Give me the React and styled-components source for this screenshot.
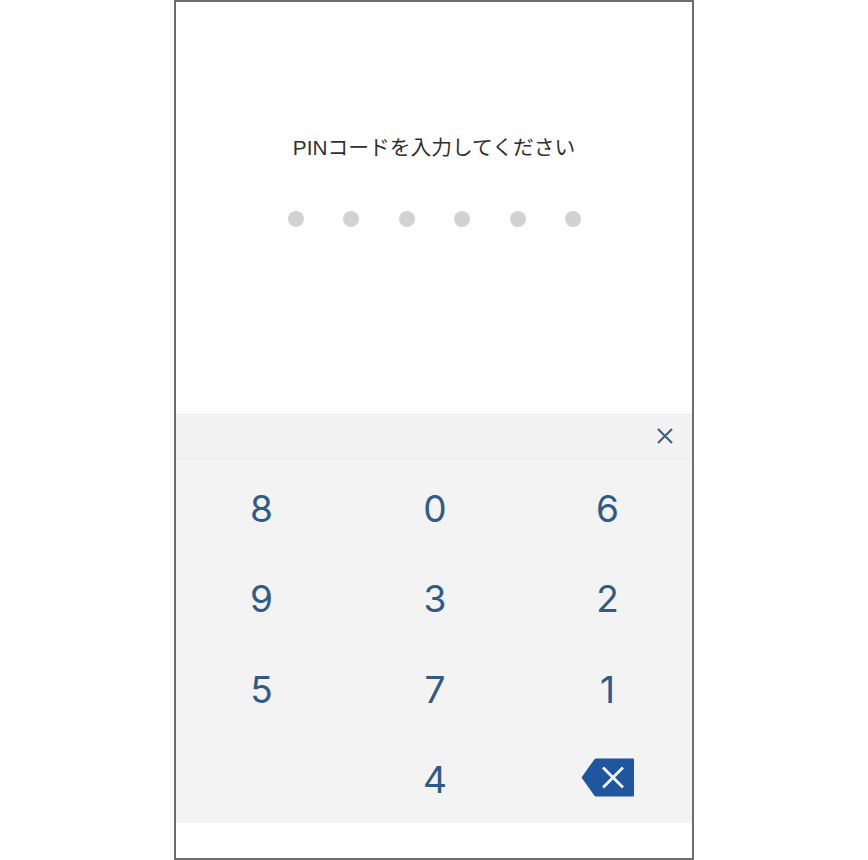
import React from "react";
import styled, { createGlobalStyle } from "styled-components";

const PIN_LENGTH = 6;
const KEYS = ["8", "0", "6", "9", "3", "2", "5", "7", "1", "", "4", "delete"];

const App = () => {
    const renderKey = (item, index) => {
        if (item === "") {
            return <span key={index} />;
        }

        if (item === "delete") {
            return (
                <Key key={index} type="button" aria-label="削除">
                    <DeleteIcon viewBox="0 0 53 39">
                        <path
                            d="M14.5 0.5H51.5Q52.5 0.5 52.5 1.5V37.5Q52.5 38.5 51.5 38.5H14.5Q13.5 38.5 12.8 37.6L0 19.5L12.8 1.4Q13.5 0.5 14.5 0.5Z"
                            fill="#20569d"
                        />
                        <path
                            d="M21.5 9.5L41.5 29.5M41.5 9.5L21.5 29.5"
                            stroke="#f0f7fd"
                            strokeWidth="2.8"
                        />
                    </DeleteIcon>
                </Key>
            );
        }

        return (
            <Key key={index} type="button">
                {item}
            </Key>
        );
    };

    return (
        <>
            <GlobalStyle />
            <Screen>
                <PinSection>
                    <Title>PINコードを入力してください</Title>
                    <DotList>
                        {Array.from({ length: PIN_LENGTH }, (_, index) => (
                            <Dot key={index} />
                        ))}
                    </DotList>
                </PinSection>
                <Toolbar>
                    <CloseButton type="button" aria-label="閉じる">
                        <CloseIcon viewBox="0 0 16 16">
                            <path d="M1 1L15 15M15 1L1 15" />
                        </CloseIcon>
                    </CloseButton>
                </Toolbar>
                <Keypad>{KEYS.map((item, index) => renderKey(item, index))}</Keypad>
            </Screen>
        </>
    );
};

const GlobalStyle = createGlobalStyle`
    * {
        box-sizing: border-box;
    }

    body {
        margin: 0;
        background: #fff;
    }
`;

const Screen = styled.main`
    display: flex;
    flex-direction: column;
    width: 520px;
    height: 860px;
    margin: 0 auto;
    border: 2px solid #6d6d6d;
    background: #fefefe;
`;

const PinSection = styled.section`
    display: flex;
    flex-direction: column;
    align-items: center;
    height: 411px;
    padding-top: 130px;
`;

const Title = styled.h1`
    margin: 0;
    font-family: "Liberation Sans", "Noto Sans CJK JP", sans-serif;
    font-size: 20.75px;
    font-weight: 400;
    line-height: 32px;
    color: #303030;
    white-space: nowrap;
`;

const DotList = styled.div`
    display: flex;
    gap: 39.5px;
    margin: 46.5px 0 0 1px;
`;

const Dot = styled.span`
    width: 16px;
    height: 16px;
    border-radius: 50%;
    background: #d2d2d2;
`;

const Toolbar = styled.div`
    display: flex;
    align-items: center;
    justify-content: flex-end;
    height: 47px;
    padding-right: 19px;
    border-top: 1px solid #f6f6f6;
    border-bottom: 2px solid #eee;
    background: #f2f2f2;
`;

const CloseButton = styled.button`
    display: flex;
    padding: 0;
    border: 0;
    background: none;
    cursor: pointer;
`;

const CloseIcon = styled.svg`
    width: 16px;
    height: 16px;
    fill: none;
    stroke: #44617a;
    stroke-width: 2.2;
`;

const Keypad = styled.div`
    display: grid;
    grid-template-columns: 171px 176px 169px;
    grid-template-rows: repeat(4, 90.5px);
    height: 363px;
    padding-top: 3px;
    background: #f3f3f3;
`;

const Key = styled.button`
    display: flex;
    align-items: center;
    justify-content: center;
    padding: 0;
    border: 0;
    background: none;
    font-family: Inter, sans-serif;
    font-size: 37px;
    line-height: 1;
    color: #305a88;
    cursor: pointer;
`;

const DeleteIcon = styled.svg`
    width: 54px;
    height: 39px;
    margin-bottom: 5px;
`;

export default App;
